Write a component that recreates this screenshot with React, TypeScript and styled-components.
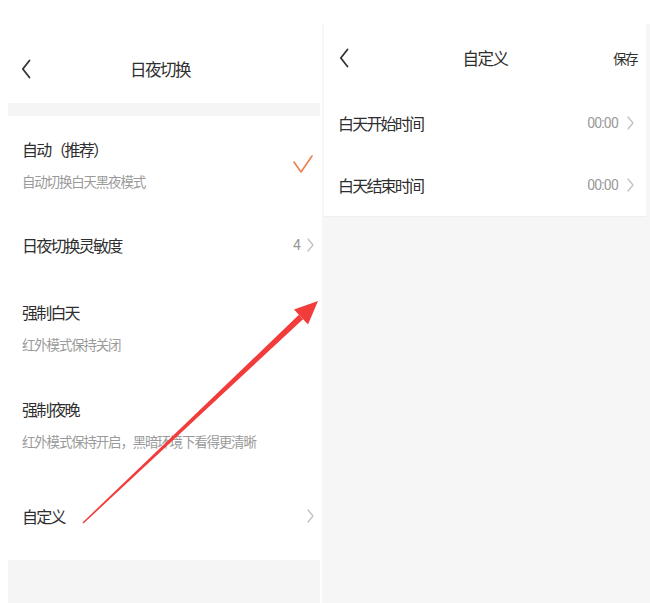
import React from "react";
import styled, { createGlobalStyle } from "styled-components";

const Global = createGlobalStyle`
  html, body { margin: 0; padding: 0; background: #ffffff; }
  body { font-family: "Noto Sans CJK SC", "Noto Sans", sans-serif; }
`;

const Page = styled.div`
  position: relative;
  width: 650px;
  height: 603px;
  display: flex;
  overflow: hidden;
  background: #ffffff;
`;

const LeftPanel = styled.div`
  width: 320px;
  display: flex;
  flex-direction: column;
  background: #ffffff;
`;

const LeftHeader = styled.div`
  padding-top: 34px;
  flex-shrink: 0;
`;

const NavBar = styled.div<{ $h: number }>`
  height: ${(p) => p.$h}px;
  position: relative;
  display: flex;
  align-items: center;
  justify-content: center;
`;

const BackButton = styled.div<{ $left: number }>`
  position: absolute;
  left: ${(p) => p.$left}px;
  top: 50%;
  transform: translateY(-50%);
  display: flex;
`;

const Title = styled.div`
  font-size: 16.5px;
  letter-spacing: -1.5px;
  color: #2e2e2e;
`;

const Band = styled.div<{ $h: number }>`
  height: ${(p) => p.$h}px;
  margin-left: 8px;
  background: #f5f5f5;
  flex-shrink: 0;
`;

const Row = styled.div<{ $h: number }>`
  height: ${(p) => p.$h}px;
  padding: 0 6px 0 22px;
  display: flex;
  align-items: center;
  justify-content: space-between;
  flex-shrink: 0;
`;

const TextBlock = styled.div`
  display: flex;
  flex-direction: column;
  gap: 13px;
`;

const RowTitle = styled.div`
  font-size: 16px;
  line-height: 20px;
  letter-spacing: -1.8px;
  color: #2e2e2e;
`;

const RowSub = styled.div`
  font-size: 13.5px;
  line-height: 18px;
  letter-spacing: -1.2px;
  color: #9a9a9a;
`;

const RightMeta = styled.div<{ $gap: number }>`
  display: flex;
  align-items: center;
  gap: ${(p) => p.$gap}px;
`;

const Value = styled.span`
  font-family: "Roboto", "Noto Sans", sans-serif;
  font-size: 14px;
  letter-spacing: -0.8px;
  color: #999999;
`;

const Fill = styled.div`
  flex: 1;
  margin-left: 8px;
  background: #f5f5f5;
`;

const RightColumn = styled.div`
  margin-left: 2px;
  flex: 1;
  padding-top: 24px;
  display: flex;
  flex-direction: column;
`;

const RightPanel = styled.div`
  flex: 1;
  background: #f6f6f6;
  padding: 0 4px 0 2px;
  display: flex;
  flex-direction: column;
`;

const Card = styled.div`
  background: #ffffff;
  display: flex;
  flex-direction: column;
  border-bottom: 1px solid #efefef;
`;

const SaveButton = styled.div`
  position: absolute;
  right: 9px;
  top: 50%;
  transform: translateY(-50%);
  font-size: 13.5px;
  letter-spacing: -1.5px;
  color: #2e2e2e;
`;

const TimeRow = styled.div`
  height: 62px;
  padding: 0 12px 0 14px;
  display: flex;
  align-items: center;
  justify-content: space-between;
`;

const ArrowLayer = styled.svg`
  position: absolute;
  left: 0;
  top: 0;
  pointer-events: none;
`;

const Back = () => (
  <svg width="10" height="20" viewBox="0 0 10 20">
    <path d="M8.5 1.5 L1.8 10 L8.5 18.5" fill="none" stroke="#333" strokeWidth="1.8" strokeLinecap="round" strokeLinejoin="round" />
  </svg>
);

const Chevron = () => (
  <svg width="7" height="14" viewBox="0 0 7 14">
    <path d="M1 1 L6 7 L1 13" fill="none" stroke="#c2c2c2" strokeWidth="1.3" strokeLinecap="round" strokeLinejoin="round" />
  </svg>
);

const Check = () => (
  <svg width="22" height="20" viewBox="0 0 22 20">
    <path d="M2 8 L9 18 L20 2" fill="none" stroke="#f07d4c" strokeWidth="1.6" strokeLinecap="round" strokeLinejoin="round" />
  </svg>
);

export default function App() {
  return (
    <>
      <Global />
      <Page>
        <LeftPanel>
          <LeftHeader>
            <NavBar $h={69}>
              <BackButton $left={21}>
                <Back />
              </BackButton>
              <Title>日夜切换</Title>
            </NavBar>
          </LeftHeader>
          <Band $h={13} />
          <Row $h={96}>
            <TextBlock>
              <RowTitle>自动（推荐）</RowTitle>
              <RowSub>自动切换白天黑夜模式</RowSub>
            </TextBlock>
            <Check />
          </Row>
          <Row $h={66}>
            <RowTitle>日夜切换灵敏度</RowTitle>
            <RightMeta $gap={7}>
              <Value>4</Value>
              <Chevron />
            </RightMeta>
          </Row>
          <Row $h={98}>
            <TextBlock>
              <RowTitle>强制白天</RowTitle>
              <RowSub>红外模式保持关闭</RowSub>
            </TextBlock>
          </Row>
          <Row $h={96}>
            <TextBlock>
              <RowTitle>强制夜晚</RowTitle>
              <RowSub>红外模式保持开启，黑暗环境下看得更清晰</RowSub>
            </TextBlock>
          </Row>
          <Row $h={88}>
            <RowTitle>自定义</RowTitle>
            <Chevron />
          </Row>
          <Fill />
        </LeftPanel>
        <RightColumn>
          <RightPanel>
            <Card>
              <NavBar $h={68}>
                <BackButton $left={15}>
                  <Back />
                </BackButton>
                <Title>自定义</Title>
                <SaveButton>保存</SaveButton>
              </NavBar>
              <TimeRow>
                <RowTitle>白天开始时间</RowTitle>
                <RightMeta $gap={9}>
                  <Value>00:00</Value>
                  <Chevron />
                </RightMeta>
              </TimeRow>
              <TimeRow>
                <RowTitle>白天结束时间</RowTitle>
                <RightMeta $gap={9}>
                  <Value>00:00</Value>
                  <Chevron />
                </RightMeta>
              </TimeRow>
            </Card>
          </RightPanel>
        </RightColumn>
        <ArrowLayer width="650" height="603" viewBox="0 0 650 603">
          <polygon points="83.5,523.5 82.5,522.5 298.9,314.8 303,319.2" fill="#f23c3c" />
          <polygon points="318,301 294,309.5 308,324.5" fill="#f23c3c" />
        </ArrowLayer>
      </Page>
    </>
  );
}
